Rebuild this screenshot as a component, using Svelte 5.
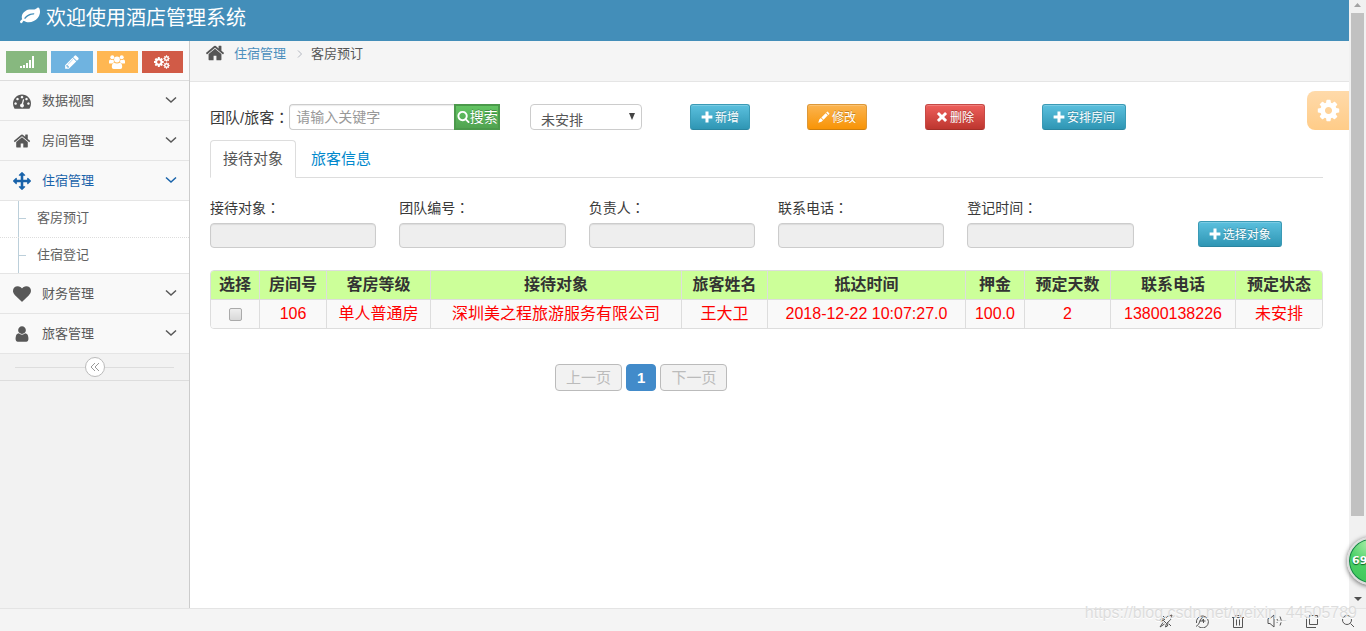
<script>
  const icons = {
    leaf: 'M1280 704q0-26-19-45t-45-19q-172 0-318 49.5t-259.5 134-235.5 219.5q-19 21-19 45 0 26 19 45t45 19q24 0 45-19 27-24 74-71t67-66q137-124 268.5-176t313.5-52q26 0 45-19t19-45zm512-198q0 95-20 193-46 224-184.5 383t-357.5 268q-214 108-438 108-148 0-286-47-15-5-88-42t-96-37q-16 0-39.5 32t-45 70-52.5 70-60 32q-43 0-63.5-17.5t-45.5-59.5q-2-4-6-11t-5.5-10-3-9.5-1.5-13.5q0-35 31-73.5t68-65.5 68-56 31-48q0-4-14-38t-16-44q-9-51-9-104 0-115 43.5-220t119-184.5 170.5-139 204-95.5q55-18 145-25.5t179.5-9 178.5-6 163.5-24 113.5-56.5l29.5-29.5 29.5-28 27-20 36.5-16 43.5-4.5q39 0 70.5 46t47.5 112 24 124 8 96z',
    home: 'M1472 992v480q0 26-19 45t-45 19h-384v-384h-256v384h-384q-26 0-45-19t-19-45v-480q0-1 .5-3t.5-3l575-474 575 474q1 2 1 6zm223-69l-62 74q-8 9-21 11h-3q-13 0-21-7l-692-577-692 577q-12 8-24 7-13-2-21-11l-62-74q-8-10-7-23.5t11-21.5l719-599q32-26 76-26t76 26l244 204v-195q0-14 9-23t23-9h192q14 0 23 9t9 23v408l219 182q10 8 11 21.5t-7 23.5z',
    move: 'M1792 896q0 26-19 45l-256 256q-19 19-45 19t-45-19-19-45v-128h-384v384h128q26 0 45 19t19 45-19 45l-256 256q-19 19-45 19t-45-19l-256-256q-19-19-19-45t19-45 45-19h128v-384h-384v128q0 26-19 45t-45 19-45-19l-256-256q-19-19-19-45t19-45l256-256q19-19 45-19t45 19 19 45v128h384v-384h-128q-26 0-45-19t-19-45 19-45l256-256q19-19 45-19t45 19l256 256q19 19 19 45t-19 45-45 19h-128v384h384v-128q0-26 19-45t45-19 45 19l256 256q19 19 19 45z',
    heart: 'M896 1664q-26 0-44-18l-624-602q-10-8-27.5-26t-55.5-65.5-68-97.5-53.5-121-23.5-138q0-220 127-344t351-124q62 0 126.5 21.5t120 58 95.5 68.5 76 68q36-36 76-68t95.5-68.5 120-58 126.5-21.5q224 0 351 124t127 344q0 221-229 450l-623 600q-18 18-44 18z',
    user: 'M1536 1399q0 109-62.5 187t-150.5 78h-854q-88 0-150.5-78t-62.5-187q0-85 8.5-160.5t31.5-152 58.5-131 94-89 134.5-34.5q131 128 313 128t313-128q76 0 134.5 34.5t94 89 58.5 131 31.5 152 8.5 160.5zm-256-887q0 159-112.5 271.5t-271.5 112.5-271.5-112.5-112.5-271.5 112.5-271.5 271.5-112.5 271.5 112.5 112.5 271.5z',
    dashboard: 'M384 1152q0-53-37.5-90.5t-90.5-37.5-90.5 37.5-37.5 90.5 37.5 90.5 90.5 37.5 90.5-37.5 37.5-90.5zm192-448q0-53-37.5-90.5t-90.5-37.5-90.5 37.5-37.5 90.5 37.5 90.5 90.5 37.5 90.5-37.5 37.5-90.5zm428 481l101-382q6-26-7.5-48.5t-38.5-29.5-48 6.5-30 39.5l-101 382q-60 5-107 43.5t-63 98.5q-20 77 20 146t117 89 146-20 89-117q16-60-6-117t-72-91zm660-33q0-53-37.5-90.5t-90.5-37.5-90.5 37.5-37.5 90.5 37.5 90.5 90.5 37.5 90.5-37.5 37.5-90.5zm-640-640q0-53-37.5-90.5t-90.5-37.5-90.5 37.5-37.5 90.5 37.5 90.5 90.5 37.5 90.5-37.5 37.5-90.5zm448 192q0-53-37.5-90.5t-90.5-37.5-90.5 37.5-37.5 90.5 37.5 90.5 90.5 37.5 90.5-37.5 37.5-90.5zm320 448q0 261-141 483-19 29-54 29h-1402q-35 0-54-29-141-221-141-483 0-182 71-348t191-286 286-191 348-71 348 71 286 191 191 286 71 348z',
    pencil: 'M491 1536l91-91-235-235-91 91v107h128v128h107zm523-928q0-22-22-22-10 0-17 7l-542 542q-7 7-7 17 0 22 22 22 10 0 17-7l542-542q7-7 7-17zm-54-192l416 416-832 832h-416v-416zm683 96q0 53-37 90l-166 166-416-416 166-165q36-38 90-38 53 0 91 38l235 234q37 39 37 91z',
    cog: 'M1152 896q0-106-75-181t-181-75-181 75-75 181 75 181 181 75 181-75 75-181zm512-109v222q0 12-8 23t-20 13l-185 28q-19 54-39 91 35 50 107 138 10 12 10 25t-9 23q-27 37-99 108t-94 71q-12 0-26-9l-138-108q-44 23-91 38-16 136-29 186-7 28-36 28h-222q-14 0-24.5-8.5t-11.5-21.5l-28-184q-49-16-90-37l-141 107q-10 9-25 9-14 0-25-11-126-114-165-168-7-10-7-23 0-12 8-23 15-21 51-66.5t54-70.5q-27-50-41-99l-183-27q-13-2-21-12.5t-8-23.5v-222q0-12 8-23t19-13l186-28q14-46 39-92-40-57-107-138-10-12-10-24 0-10 9-23 26-36 98.5-107.5t94.5-71.5q13 0 26 10l138 107q44-23 91-38 16-136 29-186 7-28 36-28h222q14 0 24.5 8.5t11.5 21.5l28 184q49 16 90 37l142-107q9-9 24-9 13 0 25 10 129 119 165 170 7 8 7 22 0 12-8 23-15 21-51 66.5t-54 70.5q26 50 41 98l183 28q13 2 21 12.5t8 23.5z',
    search: 'M1216 832q0-185-131.5-316.5t-316.5-131.5-316.5 131.5-131.5 316.5 131.5 316.5 316.5 131.5 316.5-131.5 131.5-316.5zm512 832q0 52-38 90t-90 38q-54 0-90-38l-343-342q-179 124-399 124-143 0-273.5-55.5t-225-150-150-225-55.5-273.5 55.5-273.5 150-225 225-150 273.5-55.5 273.5 55.5 225 150 150 225 55.5 273.5q0 220-124 399l343 343q37 37 37 90z',
    plus: 'M670 90h452v580h580v452h-580v580h-452v-580h-580v-452h580z',
    remove: 'M440 150l456 430 456-430 300 300-430 446 430 446-300 300-456-430-456 430-300-300 430-446-430-446z',
    edit: 'M40 1752l150-480 230-230 330 330-230 230zM500 960l640-640 330 330-640 640zM1220 240l130-130q50-40 100 10l230 230q50 50 10 100l-130 130z'
  };

  const menu = [
    { name: '数据视图', icon: 'dashboard' },
    { name: '房间管理', icon: 'home' },
    { name: '住宿管理', icon: 'move', children: ['客房预订', '住宿登记'] },
    { name: '财务管理', icon: 'heart' },
    { name: '旅客管理', icon: 'user' }
  ];

  const actions = [
    { name: '新增', icon: 'plus', type: 'info' },
    { name: '修改', icon: 'edit', type: 'warning' },
    { name: '删除', icon: 'remove', type: 'danger' },
    { name: '安排房间', icon: 'plus', type: 'info' }
  ];

  const fields = ['接待对象', '团队编号', '负责人', '联系电话', '登记时间'];

  // width 是各列的相对宽度
  const columns = [
    { title: '选择', width: 48 },
    { title: '房间号', width: 67 },
    { title: '客房等级', width: 104 },
    { title: '接待对象', width: 251 },
    { title: '旅客姓名', width: 86 },
    { title: '抵达时间', width: 198 },
    { title: '押金', width: 59 },
    { title: '预定天数', width: 86 },
    { title: '联系电话', width: 125 },
    { title: '预定状态', width: 87 }
  ];
  const total = columns.reduce((sum, c) => sum + c.width, 0);

  const rows = [
    ['106', '单人普通房', '深圳美之程旅游服务有限公司', '王大卫', '2018-12-22 10:07:27.0', '100.0', '2', '13800138226', '未安排']
  ];

  let opened = $state('住宿管理');
  let tab = $state('接待对象');
  let keyword = $state('');
</script>

{#snippet icon(name, size)}
  <svg class="icon" width={size} height={size} viewBox="0 0 1792 1792" aria-hidden="true"><path d={icons[name]} /></svg>
{/snippet}

<div class="window">
  <div class="viewport">
    <div class="page">
      <header class="navbar">
        {@render icon('leaf', 20)}
        <span>欢迎使用酒店管理系统</span>
      </header>

      <div class="main">
        <aside class="sidebar">
          <div class="shortcuts">
            <button class="green" aria-label="统计">
              <svg width="16" height="14" viewBox="0 0 16 14"><path d="M1 11h2v2H1zM4 10h2v3H4zM7 8h2v5H7zM10 5h2v8h-2zM13 1h2v12h-2z" /></svg>
            </button>
            <button class="blue" aria-label="编辑">{@render icon('pencil', 16)}</button>
            <button class="orange" aria-label="用户">
              <svg width="16" height="14" viewBox="0 0 16 14">
                <circle cx="3.3" cy="2.3" r="2" /><circle cx="12.7" cy="2.3" r="2" /><circle cx="8" cy="4.5" r="2.9" />
                <path d="M0 8V6.500Q0 4.500 1.500 4.500Q3.300 5.500 4.600 4.800Q4.600 6.500 5.300 7.300Q3.800 7.500 3.200 8.500H1Q0 8.500 0 8zM16 8V6.500Q16 4.500 14.500 4.500Q12.700 5.500 11.400 4.800Q11.400 6.500 10.700 7.300Q12.200 7.500 12.800 8.500H15Q16 8.500 16 8zM5 7.800Q8 9.400 11 7.800Q13.200 8.300 13.200 12Q13.200 14 11.300 14H4.700Q2.800 14 2.800 12Q2.800 8.300 5 7.800z" />
              </svg>
            </button>
            <button class="red" aria-label="设置">
              <svg width="16" height="14" viewBox="0 0 2048 1792">
                <path transform="translate(-120 160) scale(.82)" d={icons.cog} />
                <path transform="translate(1140 -20) scale(.52)" d={icons.cog} />
                <path transform="translate(1140 880) scale(.52)" d={icons.cog} />
              </svg>
            </button>
          </div>

          <ul class="nav">
            {#each menu as item}
              <li>
                <a href="#menu" class:active={item.name === opened} onclick={() => (opened = item.name)}>
                  {@render icon(item.icon, 18)}
                  <span>{item.name}</span>
                  <svg class="arrow" width="12" height="8" viewBox="0 0 12 8"><path d="M1 1.500l5 4.500 5-4.500" /></svg>
                </a>
                {#if item.children && item.name === opened}
                  <ul class="submenu">
                    {#each item.children as child}
                      <li><a href="#sub">{child}</a></li>
                    {/each}
                  </ul>
                {/if}
              </li>
            {/each}
          </ul>

          <div class="collapse">
            <button aria-label="收起菜单">
              <svg width="10" height="10" viewBox="0 0 10 10"><path d="M5 1L1 5l4 4M9 1L5 5l4 4" /></svg>
            </button>
          </div>
        </aside>

        <div class="content">
          <nav class="breadcrumb">
            {@render icon('home', 20)}
            <a href="#home">住宿管理</a>
            <svg class="sep" width="6" height="8" viewBox="0 0 6 8"><path d="M1 0.500L4.500 4 1 7.500" /></svg>
            <span>客房预订</span>
          </nav>

          <section class="body">
            <div class="toolbar">
              <form class="search" onsubmit={(e) => e.preventDefault()}>
                <label for="keyword">团队/旅客<span class="colon">：</span></label>
                <input id="keyword" type="text" placeholder="请输入关键字" bind:value={keyword} />
                <button type="submit">{@render icon('search', 13)}搜索</button>
              </form>
              <div class="select">
                <select aria-label="状态">
                  <option>未安排</option>
                  <option>已安排</option>
                </select>
                <svg width="6" height="7" viewBox="0 0 6 7"><path d="M0 0h6L3 7z" /></svg>
              </div>
              {#each actions as a}
                <div><button class="btn {a.type}">{@render icon(a.icon, 12)}{a.name}</button></div>
              {/each}
            </div>

            <div class="tabs">
              {#each ['接待对象', '旅客信息'] as t}
                <button class:active={t === tab} onclick={() => (tab = t)}>{t}</button>
              {/each}
            </div>

            <div class="fields">
              {#each fields as f, i}
                <div class="field">
                  <label for="field{i}">{f}<span class="colon">：</span></label>
                  <input id="field{i}" type="text" disabled />
                </div>
              {/each}
              <button class="btn info">{@render icon('plus', 12)}选择对象</button>
            </div>

            <table>
              <colgroup>
                {#each columns as c}
                  <col style="width: {(c.width / total) * 100}%" />
                {/each}
              </colgroup>
              <thead>
                <tr>
                  {#each columns as c}<th>{c.title}</th>{/each}
                </tr>
              </thead>
              <tbody>
                {#each rows as row}
                  <tr>
                    <td><input type="checkbox" aria-label="选择 {row[0]}" /></td>
                    {#each row as cell}<td>{cell}</td>{/each}
                  </tr>
                {/each}
              </tbody>
            </table>

            <div class="pagination">
              <button disabled>上一页</button>
              <button class="current">1</button>
              <button disabled>下一页</button>
            </div>
          </section>

          <button class="settings" aria-label="页面设置">{@render icon('cog', 25)}</button>
        </div>
      </div>
    </div>

    <div class="scrollbar">
      <svg width="7" height="4" viewBox="0 0 7 4"><path fill="#a3a3a3" d="M0 4h7L3.500 0z" /></svg>
      <div class="track"><div class="thumb"></div></div>
      <svg width="8" height="4" viewBox="0 0 8 4"><path fill="#505050" d="M0 0h8L4 4z" /></svg>
    </div>
    <div class="ball">69</div>
  </div>

  <footer class="statusbar">
    <svg width="14" height="14" viewBox="0 0 14 14"><path d="M13 1Q8 1 4.500 6.500L7.500 9.500Q13 6 13 1zM5.500 5L2 5 1 7 4.500 6.500M9 8.500L8.500 12 6.500 13 7.500 9.500M4 2l2 2M10 10l2 2M4 8.500l-3 4.500 4.500-3" /></svg>
    <svg width="14" height="14" viewBox="0 0 14 14"><path d="M3.500 12.500A6 6 0 1 0 1.500 9M1 12.500Q4 11 5 7Q6 3 9 3L7.500 7M4.500 7h6M8.500 4v5" /></svg>
    <svg width="14" height="14" viewBox="0 0 14 14"><path d="M1 3.500h12M4.500 3.500v-2h5v2M2.500 3.500v10h9v-10M5.500 5.500v6M8.500 5.500v6" /></svg>
    <svg width="16" height="14" viewBox="0 0 16 14"><path d="M1 4.500h2L7 1v12L3 9.500H1zM10 5q1.500 2 0 4M13 2.500q3 4.500 0 9" /></svg>
    <svg width="14" height="14" viewBox="0 0 14 14"><path d="M4.500 1.500h8v9h-8zM1.500 3v10.500H11" /></svg>
    <svg width="14" height="14" viewBox="0 0 14 14"><circle cx="6" cy="6" r="4.500" /><path d="M9.500 9.500L13 13" /></svg>
    <span class="watermark">https://blog.csdn.net/weixin_44505789</span>
  </footer>
</div>

<style>
  :global(body) { margin: 0; }
  .window { height: 100vh; display: flex; flex-direction: column; overflow: hidden; position: relative; font-family: "Liberation Sans", "Noto Sans CJK SC", sans-serif; font-size: 13px; color: #393939; background: #fff; }
  button, input, select { font-family: inherit; box-sizing: border-box; }
  button { cursor: pointer; }
  a { text-decoration: none; }
  ul { list-style: none; margin: 0; padding: 0; }
  .icon { fill: currentColor; flex: none; }
  .colon { font-family: "Noto Sans CJK TC", sans-serif; }

  .viewport { flex: 1; min-height: 0; display: flex; position: relative; overflow: hidden; }
  .page { flex: 1; min-width: 0; display: flex; flex-direction: column; }
  .navbar { height: 41px; background: #438eb9; color: #fff; font-size: 20px; display: flex; align-items: center; gap: 6px; padding: 0 20px 9px; box-sizing: border-box; }
  .main { flex: 1; display: flex; min-height: 0; }

  .sidebar { width: 189px; flex: none; background: #f2f2f2; border-right: 1px solid #ccc; }
  .shortcuts { height: 40px; box-sizing: border-box; display: flex; align-items: center; gap: 4px; padding: 3px 6px 0; background: #fafafa; border-bottom: 1px solid #ddd; }
  .shortcuts button { flex: 1; height: 22px; border: 0; padding: 0; display: flex; align-items: center; justify-content: center; color: #fff; }
  .shortcuts svg { fill: #fff; }
  .shortcuts .green { background: #87b87f; }
  .shortcuts .blue { background: #6fb3e0; }
  .shortcuts .orange { background: #ffb752; }
  .shortcuts .red { background: #d15b47; }

  .nav > li { border-bottom: 1px solid #e5e5e5; }
  .nav > li > a { height: 39px; display: flex; align-items: center; padding: 0 12px 0 13px; background: #f9f9f9; color: #585858; }
  .nav > li > a span { flex: 1; padding: 0 0 3px 11px; }
  .nav > li > a.active { color: #1963aa; }
  .nav .arrow { fill: none; stroke: currentColor; stroke-width: 1.5; margin-bottom: 2px; }
  .submenu { position: relative; background: #fff; border-top: 1px solid #e5e5e5; }
  .submenu::before { content: ''; position: absolute; left: 18px; top: 0; bottom: 0; border-left: 1px solid #bccfda; }
  .submenu li { position: relative; height: 36px; box-sizing: border-box; }
  .submenu li + li { border-top: 1px dotted #ddd; }
  .submenu li::before { content: ''; position: absolute; left: 19px; top: 17px; width: 7px; border-top: 1px solid #bccfda; }
  .submenu a { display: block; padding-left: 37px; line-height: 34px; color: #616161; }

  .collapse { height: 26px; display: flex; align-items: center; padding: 0 15px; border-bottom: 1px solid #ddd; }
  .collapse::before, .collapse::after { content: ''; flex: 1; border-top: 1px solid #ddd; }
  .collapse button { width: 20px; height: 20px; padding: 0; border: 1px solid #bbb; border-radius: 50%; background: #fff; display: flex; align-items: center; justify-content: center; }
  .collapse svg { fill: none; stroke: #999; }

  .content { flex: 1; min-width: 0; position: relative; }
  .breadcrumb { height: 41px; box-sizing: border-box; display: flex; align-items: center; padding: 0 15px 17px; background: #f5f5f5; border-bottom: 1px solid #e5e5e5; color: #555; }
  .breadcrumb a { color: #4c8fbd; padding-left: 9px; }
  .sep { fill: none; stroke: #b2b6bf; margin: 3px 8px 0 11px; }

  .body { padding: 22px 26px 20px 20px; }
  .toolbar { display: grid; grid-template-columns: 320fr 160fr 117fr 118fr 117fr 281fr; }
  .search { display: flex; align-items: center; margin: 0; }
  .search label { font-size: 15px; white-space: nowrap; padding-bottom: 2px; }
  .search input { width: 165px; height: 26px; border: 1px solid #ccc; border-right: 0; border-radius: 4px 0 0 4px; padding: 0 6px; font-size: 14px; box-shadow: inset 0 1px 1px rgba(0, 0, 0, 0.08); }
  .search input::placeholder { color: #999; }
  .search button { height: 26px; width: 46px; display: flex; align-items: center; justify-content: center; border: 2px solid #4b994b; padding: 0 0 2px; background: linear-gradient(#62c462, #51a351); color: #fff; font-size: 14px; white-space: nowrap; text-shadow: 0 -1px 0 rgba(0, 0, 0, 0.25); }
  .select { position: relative; width: 112px; }
  .select select { width: 100%; height: 26px; appearance: none; border: 1px solid #ccc; border-radius: 4px; background: #fff; padding: 5px 10px 0; font-size: 14px; color: #555; }
  .select svg { position: absolute; right: 7px; top: 9px; fill: #444; pointer-events: none; }

  .btn { height: 26px; padding: 0 10px 2px; display: inline-flex; align-items: center; gap: 2px; border: 1px solid; border-radius: 3px; color: #fff; font-size: 12px; white-space: nowrap; text-shadow: 0 -1px 0 rgba(0, 0, 0, 0.25); box-shadow: inset 0 1px 0 rgba(255, 255, 255, 0.2); }
  .btn .icon { margin-top: 2px; }
  .info { background: linear-gradient(#5bc0de, #2f96b4); border-color: #3a9ab5 #3a9ab5 #2a85a0; }
  .warning { background: linear-gradient(#fbb450, #f89406); border-color: #dd9838 #dd9838 #ce7f0f; }
  .danger { background: linear-gradient(#ee5f5b, #bd362f); border-color: #c64945 #c64945 #a32f29; }

  .tabs { display: flex; margin-top: 10px; border-bottom: 1px solid #ddd; }
  .tabs button { height: 38px; margin-bottom: -1px; padding: 0 12px 3px; border: 1px solid transparent; border-radius: 4px 4px 0 0; background: none; font-size: 15px; color: #08c; margin-right: 2px; }
  .tabs .active { background: #fff; border-color: #ddd #ddd #fff; color: #555; }

  .fields { display: grid; grid-template-columns: repeat(6, 1fr); column-gap: 23px; align-items: end; margin: 19px 0 22px; }
  .field { display: flex; flex-direction: column; gap: 5px; }
  .field label { font-size: 14px; line-height: 20px; }
  .field input { width: 100%; height: 25px; border: 1px solid #ccc; border-radius: 4px; background: #eee; box-shadow: inset 0 1px 1px rgba(0, 0, 0, 0.08); }
  .fields .btn { justify-self: center; margin-bottom: 1px; }

  table { width: 100%; table-layout: fixed; border-collapse: separate; border-spacing: 0; border: 1px solid #ddd; border-radius: 4px; overflow: hidden; font-size: 16px; text-align: center; }
  th, td { height: 28px; padding: 0; line-height: 28px; white-space: nowrap; }
  th { background: #cf9; color: #333; }
  td { background: #f9f9f9; color: #f00; border-top: 1px solid #ddd; }
  th + th, td + td { border-left: 1px solid #ddd; }
  td input { appearance: none; display: block; width: 13px; height: 13px; margin: 1px auto 0; border: 1px solid #aaa; border-radius: 2px; background: linear-gradient(#eee, #d8d8d8); }
  td input:checked { background: #438eb9; }

  .pagination { display: flex; gap: 4px; margin: 35px 0 0 31%; }
  .pagination button { height: 27px; padding: 0 10px; border: 1px solid #bbb; border-radius: 4px; background: #f2f2f2; color: #bbb; font-size: 15px; line-height: 25px; }
  .pagination .current { background: #428bca; border-color: #428bca; color: #fff; font-weight: bold; }

  .settings { position: absolute; right: 0; top: 50px; width: 42px; height: 39px; padding: 0; border: 0; border-radius: 8px 0 0 8px; background: linear-gradient(#ffdaaa, #ffcc88); color: #fff; display: flex; align-items: center; justify-content: center; }

  .scrollbar { width: 17px; flex: none; box-sizing: border-box; background: #f1f1f1; display: flex; flex-direction: column; align-items: center; padding: 3px 0 7px; gap: 6px; }
  .track { flex: 1; width: 13px; }
  .thumb { height: 87%; background: #c1c1c1; }
  .ball { position: absolute; right: -29px; bottom: 23px; width: 48px; height: 48px; box-sizing: border-box; border: 2px solid #ddd; border-radius: 50%; background: radial-gradient(circle at 45% 10%, #a8eda8, #4bd066 45%, #3cc455); box-shadow: inset 0 0 0 1px #17804a, 0 1px 5px rgba(0, 0, 0, 0.6); color: #fff; font: bold 11px/44px "DejaVu Sans", sans-serif; padding-left: 3px; text-shadow: 0 1px 1px #0a5c20; }

  .statusbar { height: 23px; flex: none; box-sizing: border-box; border-top: 1px solid #e4e4e4; background: #f4f4f4; display: flex; align-items: center; justify-content: flex-end; gap: 22px; padding: 2px 11px 0 0; }
  .statusbar svg { flex: none; fill: none; stroke: #555; }
  .watermark { position: absolute; right: 9px; bottom: 9px; font-size: 16px; line-height: 18px; color: rgba(200, 200, 200, 0.6); text-shadow: 0 1px 0 #fff; pointer-events: none; }
</style>
